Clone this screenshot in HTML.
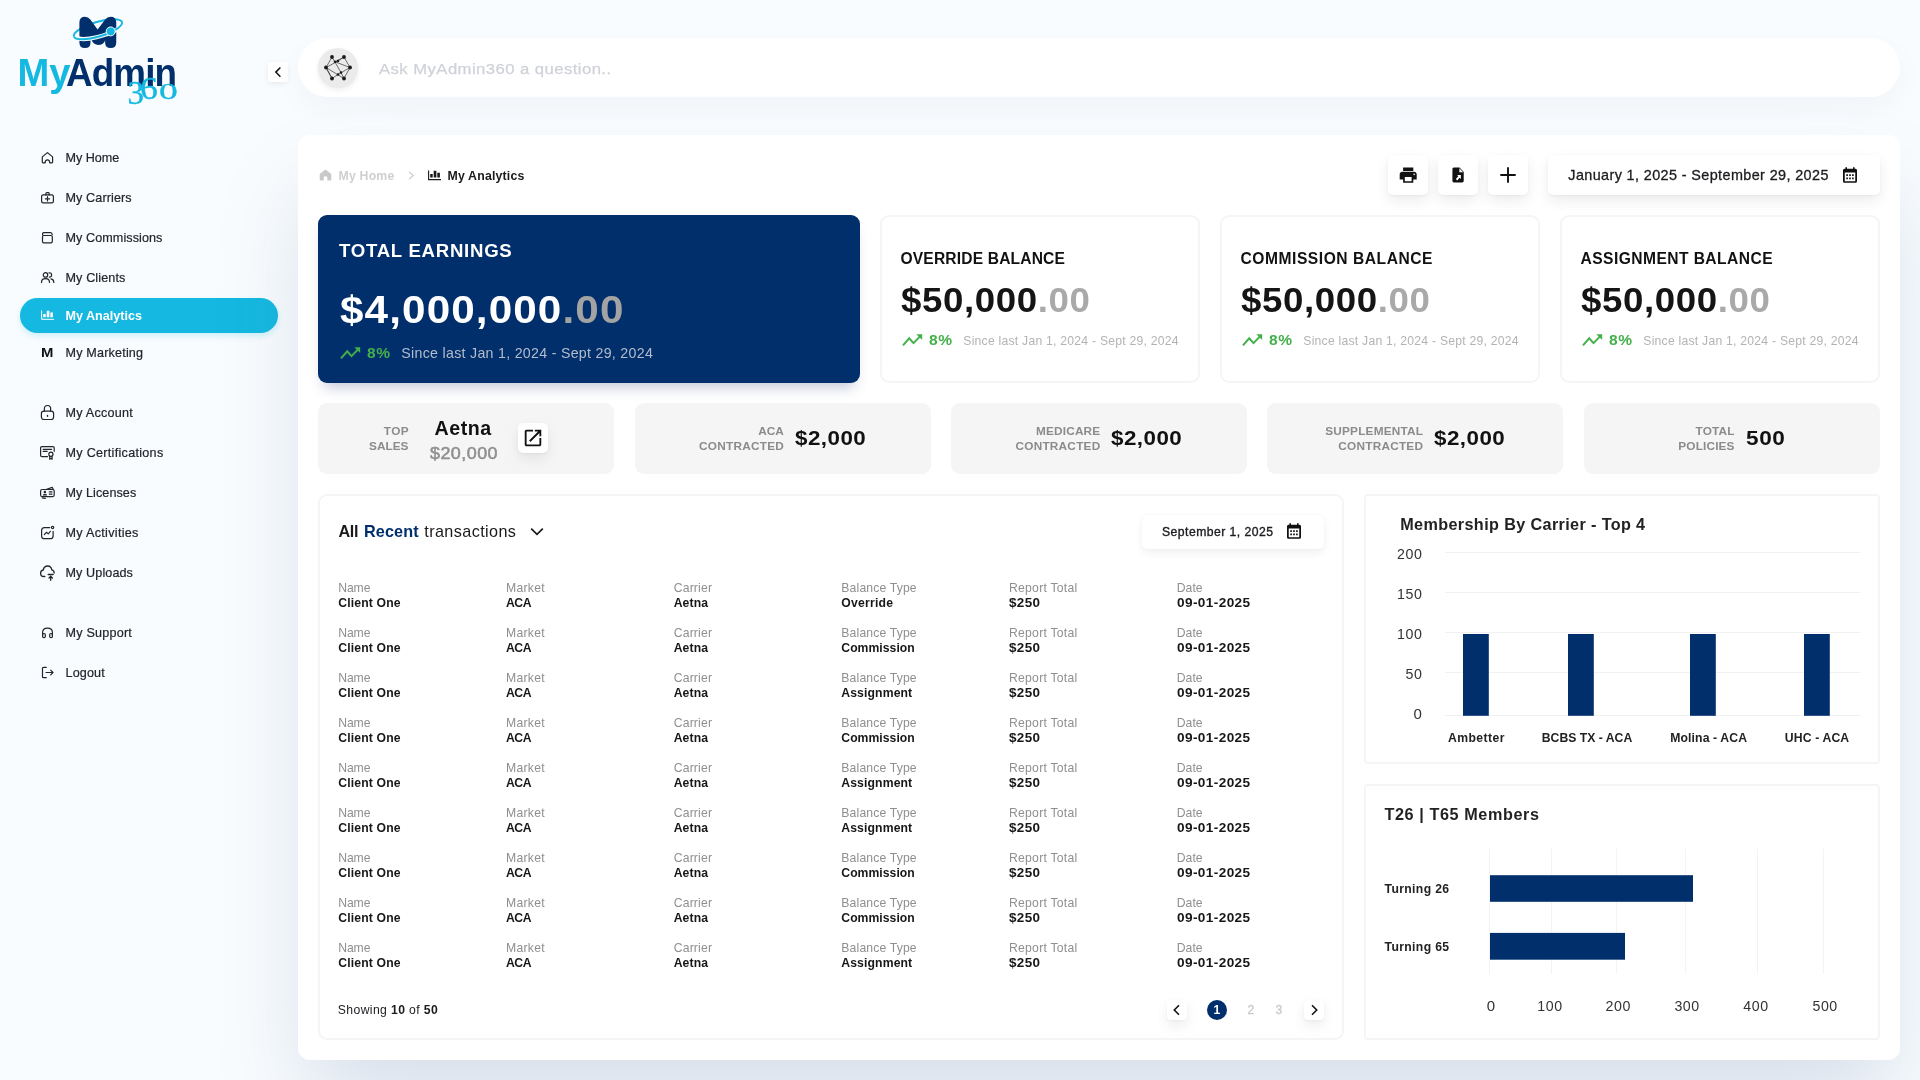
<!DOCTYPE html>
<html lang="en">
<head>
<meta charset="utf-8">
<title>MyAdmin360 - My Analytics</title>
<style>
*{box-sizing:border-box;margin:0;padding:0}
html,body{width:1920px;height:1080px;overflow:hidden}
body{position:relative;font-family:"Liberation Sans",Arial,sans-serif;color:#1b1b1f;background:#f9fcfe}
#root{position:absolute;left:0;top:0;width:1920px;height:1080px;will-change:transform}
.abs{position:absolute}
.t{position:absolute;white-space:nowrap;line-height:1}
.ico{position:absolute;overflow:visible}
.nv{fill:none;stroke:#22252b;stroke-width:1.2;stroke-linecap:round;stroke-linejoin:round}
#pill{position:absolute;left:20px;top:298px;width:258px;height:35px;border-radius:18px;background:#14b8e0;box-shadow:0 3px 6px rgba(20,184,224,.2)}
#search{position:absolute;left:298px;top:38px;width:1602px;height:59px;border-radius:30px;background:#fff;box-shadow:0 12px 26px rgba(92,120,162,.05)}
#main{position:absolute;left:298px;top:135px;width:1602px;height:925px;border-radius:12px;background:#fff;box-shadow:0 50px 90px -10px rgba(92,120,162,.22)}
.btn{position:absolute;background:#fff;border-radius:5px;box-shadow:0 6px 14px rgba(0,0,0,.075),0 1px 3px rgba(0,0,0,.045)}
.card{position:absolute;background:#fff;border:2px solid #f5f5f5;border-radius:9px}
.stat{position:absolute;top:403px;height:70.5px;width:296px;background:#f5f5f5;border-radius:9px}
</style>
</head>
<body>
<div id="root">

<svg class="ico" style="left:60px;top:5px" width="80" height="50" viewBox="0 0 80 50">
 <path d="M13.900 31.500 A25.100 7.300 -16.700 0 1 62 17.100" fill="none" stroke="#14b8e0" stroke-width="2"/>
 <path d="M19.400 37.500 L19.400 17.500 Q19.400 11.800 25 11.800 Q28.300 11.800 30.300 14.500 L37.600 24.600 L45.200 14.500 Q47.200 11.800 50.600 11.800 Q56.250 11.800 56.250 17.500 L56.250 37.500 Q56.250 43.050 50.700 43.050 Q45.100 43.050 45.100 37.500 L45.100 35 C44.500 38.500 41.500 39.900 38.400 39.900 C35 39.900 32.600 38 31.600 35 L30.500 35 L30.500 37.500 Q30.500 43.050 25 43.050 Q19.400 43.050 19.400 37.500 Z" fill="#002f6c"/>
 <path d="M57.500 24 A25.100 7.300 -16.700 0 1 18 33.300" fill="none" stroke="#f9fcfe" stroke-width="4.200"/>
 <path d="M62 17.100 A25.100 7.300 -16.700 0 1 13.900 31.500" fill="none" stroke="#14b8e0" stroke-width="2"/>
 <circle cx="50.700" cy="26.400" r="4.500" fill="#14b8e0" stroke="#f9fcfe" stroke-width="1"/>
</svg>
<span id="t0" class="t" style="left:17.40px;top:54.00px;font-size:38.2px;font-weight:bold;color:#14b8e0;letter-spacing:0.069px">My</span><span id="t1" class="t" style="left:66.30px;transform:scaleX(0.9638);transform-origin:left center;top:54.00px;font-size:38.2px;font-weight:bold;color:#002f6c;letter-spacing:-0.892px">Admin</span>
<span id="t2" class="t" style="left:127.40px;top:77.00px;font-size:33px;color:#14b8e0;-webkit-text-stroke:0.4px;font-family:'Liberation Serif',serif">3</span><span id="t3" class="t" style="left:139.60px;transform:scaleX(1.1300);transform-origin:left center;top:73.00px;font-size:31.5px;color:#14b8e0;-webkit-text-stroke:0.4px;letter-spacing:1.507px;font-family:'Liberation Serif',serif">6</span><span id="t4" class="t" style="left:158.80px;transform:scaleX(1.6000);transform-origin:left center;top:80.00px;font-size:23.5px;color:#14b8e0;-webkit-text-stroke:0.3px;letter-spacing:-0.125px;font-family:'Liberation Serif',serif">0</span>
<div id="pill"></div>
<svg class="ico" style="left:40px;top:150.3px" width="15" height="15" viewBox="0 0 15 15"><path class="nv" d="M2.300 6.900 L7.450 2.600 L12.600 6.900 V12.050 Q12.600 12.850 11.800 12.850 H9.750 Q9.750 9.900 7.450 9.900 Q5.150 9.900 5.150 12.850 H3.100 Q2.300 12.850 2.300 12.050 Z"/></svg>
<span id="t5" class="t" style="left:65.50px;top:152.00px;font-size:12.6px;color:#22252b;-webkit-text-stroke:0.2px;letter-spacing:-0.020px">My Home</span>
<svg class="ico" style="left:40px;top:190.3px" width="15" height="15" viewBox="0 0 15 15"><rect class="nv" x="1.600" y="4.900" width="11.800" height="7.950" rx="1.600"/><path class="nv" d="M5.900 4.900 V3.400 Q5.900 2.600 6.700 2.600 H8.300 Q9.100 2.600 9.100 3.400 V4.900 M7.500 6.700 V11 M5.350 8.850 H9.650"/></svg>
<span id="t6" class="t" style="left:65.50px;top:192.00px;font-size:12.6px;color:#22252b;-webkit-text-stroke:0.2px;letter-spacing:0.107px">My Carriers</span>
<svg class="ico" style="left:40px;top:230.3px" width="15" height="15" viewBox="0 0 15 15"><rect class="nv" x="2.500" y="5.500" width="9.800" height="7.350" rx="1.300"/><path class="nv" d="M2.600 5 V3.900 Q2.600 2.600 3.900 2.600 H10.600 Q12 2.600 12.200 4.600"/></svg>
<span id="t7" class="t" style="left:65.50px;top:232.00px;font-size:12.6px;color:#22252b;-webkit-text-stroke:0.2px;letter-spacing:0.080px">My Commissions</span>
<svg class="ico" style="left:40px;top:270.3px" width="15" height="15" viewBox="0 0 15 15"><circle class="nv" cx="5.500" cy="4.900" r="2.250"/><path class="nv" d="M1.500 12.400 Q1.500 8.700 5.500 8.700 Q9.500 8.700 9.500 12.400 M9 2.800 Q11.600 2.600 11.600 4.900 Q11.600 7 9.400 7.100 M11 8.900 Q13.800 9.400 13.800 12.400"/></svg>
<span id="t8" class="t" style="left:65.50px;top:272.00px;font-size:12.6px;color:#22252b;-webkit-text-stroke:0.2px;letter-spacing:0.122px">My Clients</span>
<svg class="ico" style="left:40px;top:308.3px" width="15" height="15" viewBox="0 0 15 15"><path d="M1.600 2.500 V11.300 H14" fill="none" stroke="#fff" stroke-width="1"/><path d="M3.200 6 h2.500 v3.300 h-2.500z M6.700 2.750 h2.650 v6.550 h-2.650z M10.300 4.600 h2.600 v4.700 h-2.600z" fill="#fff"/></svg>
<span id="t9" class="t" style="left:65.50px;top:310.00px;font-size:12.6px;font-weight:bold;color:#fff">My Analytics</span>
<span id="t10" class="t" style="left:41.00px;transform:scaleX(1.1011);transform-origin:left center;top:346.00px;font-size:13.5px;font-weight:bold;color:#111;letter-spacing:0.556px">M</span>
<span id="t11" class="t" style="left:65.50px;top:347.00px;font-size:12.6px;color:#22252b;-webkit-text-stroke:0.2px;letter-spacing:0.180px">My Marketing</span>
<svg class="ico" style="left:40px;top:405.3px" width="15" height="15" viewBox="0 0 15 15"><rect class="nv" x="1.400" y="6.100" width="12.200" height="8.400" rx="2.500"/><path class="nv" d="M4.350 6.100 V3.800 Q4.350 0.500 7.500 0.500 Q10.650 0.500 10.650 3.800 V6.100"/><rect x="6.800" y="9.700" width="1.400" height="2.300" rx="0.700" fill="#22252b"/></svg>
<span id="t12" class="t" style="left:65.50px;top:407.00px;font-size:12.6px;color:#22252b;-webkit-text-stroke:0.2px;letter-spacing:0.239px">My Account</span>
<svg class="ico" style="left:40px;top:445.3px" width="15" height="15" viewBox="0 0 15 15"><path class="nv" d="M7.600 11.600 H2 Q0.600 11.600 0.600 10.200 V3 Q0.600 1.550 2 1.550 H12.800 Q14.200 1.550 14.200 3 V6.300 M3.200 4.300 H11.600 M3.200 6.400 H7.200"/><circle class="nv" cx="10.900" cy="9.300" r="2.100"/><path class="nv" d="M9.700 11.200 V14.200 L10.900 13.300 L12.100 14.200 V11.200"/></svg>
<span id="t13" class="t" style="left:65.50px;top:447.00px;font-size:12.6px;color:#22252b;-webkit-text-stroke:0.2px;letter-spacing:0.290px">My Certifications</span>
<svg class="ico" style="left:40px;top:485.3px" width="15" height="15" viewBox="0 0 15 15"><rect class="nv" x="0.600" y="4.500" width="13.600" height="7.100" rx="1.500"/><path class="nv" d="M6 4.500 L12.200 2.400 L13.300 4.500 M2.200 12.900 L5.200 13.300 M9.300 6.900 H12 M9.300 9.100 H12"/><circle cx="4.900" cy="7" r="1.250" fill="#22252b"/><path d="M2.700 10.600 Q2.700 8.700 4.900 8.700 Q7.100 8.700 7.100 10.600 Z" fill="#22252b"/></svg>
<span id="t14" class="t" style="left:65.50px;top:487.00px;font-size:12.6px;color:#22252b;-webkit-text-stroke:0.2px;letter-spacing:0.073px">My Licenses</span>
<svg class="ico" style="left:40px;top:525.3px" width="15" height="15" viewBox="0 0 15 15"><path class="nv" d="M9.800 2.600 H4.400 Q1.600 2.600 1.600 5.400 V10.900 Q1.600 13.700 4.400 13.700 H10.300 Q13.100 13.700 13.100 10.900 V6.300"/><circle class="nv" cx="12.600" cy="2.600" r="1.150"/><path class="nv" d="M4.300 9.600 L6.300 7.300 L8.200 8.800 L10.400 6.400"/></svg>
<span id="t15" class="t" style="left:65.50px;top:527.00px;font-size:12.6px;color:#22252b;-webkit-text-stroke:0.2px;letter-spacing:0.301px">My Activities</span>
<svg class="ico" style="left:40px;top:565.3px" width="15" height="15" viewBox="0 0 15 15"><g transform="translate(7.300 8.100) scale(1.100 1.220) translate(-7.500 -8.150)"><path class="nv" d="M5.200 11 H4.300 Q1.400 11 1.400 8.300 Q1.400 5.900 3.800 5.600 Q4.500 2.300 7.800 2.300 Q11 2.300 11.600 5.500 Q13.700 5.900 13.700 8"/><path class="nv" d="M8.300 9.300 H12.800 M10.600 14 V10.800 M9.100 12.200 L10.600 10.700 L12.100 12.200"/></g></svg>
<span id="t16" class="t" style="left:65.50px;top:567.00px;font-size:12.6px;color:#22252b;-webkit-text-stroke:0.2px;letter-spacing:0.100px">My Uploads</span>
<svg class="ico" style="left:40px;top:625.3px" width="15" height="15" viewBox="0 0 15 15"><path class="nv" d="M2.600 10.400 V7.500 Q2.600 3.200 7.500 3.200 Q12.400 3.200 12.400 7.500 V10.400"/><rect class="nv" x="2.600" y="8.500" width="2.700" height="4.200" rx="1.200"/><rect class="nv" x="9.700" y="8.500" width="2.700" height="4.200" rx="1.200"/></svg>
<span id="t17" class="t" style="left:65.50px;top:627.00px;font-size:12.6px;color:#22252b;-webkit-text-stroke:0.2px;letter-spacing:0.219px">My Support</span>
<svg class="ico" style="left:40px;top:665.3px" width="15" height="15" viewBox="0 0 15 15"><path class="nv" d="M6.300 2.300 H3.500 Q2.500 2.300 2.500 3.300 V11.700 Q2.500 12.700 3.500 12.700 H6.300 M6 7.500 H13 M10.700 5.200 L13 7.500 L10.700 9.800"/></svg>
<span id="t18" class="t" style="left:65.50px;top:667.00px;font-size:12.6px;color:#22252b;-webkit-text-stroke:0.2px;letter-spacing:0.145px">Logout</span>
<div class="btn" style="left:268px;top:62px;width:20px;height:20px;border-radius:3px;box-shadow:0 2px 6px rgba(0,0,0,.07)">
<svg width="20" height="20" viewBox="0 0 20 20"><path d="M12.400 5.500 L7.800 10.100 L12.400 14.700" fill="none" stroke="#111" stroke-width="1.500"/></svg></div>
<div id="search"><div class="abs" style="left:20px;top:10px;width:40px;height:40px;border-radius:50%;background:#ebebeb;box-shadow:0 2px 5px rgba(0,0,0,.07)"></div>
<svg class="ico" style="left:20px;top:10px" width="40" height="40" viewBox="0 0 40 40">
<g stroke="#1a1a1a" stroke-width="0.600" fill="none"><path d="M14 9 L8 19.500 L14 30.500 M26 9 L32 19.500 L26 30.500 M14 9 L23 24.500 M26 9 L17 13.800 M8 19.500 L20 13 M32 19.500 L20 26.500 M14 30.500 L8 19.500 M26 30.500 L23 24.500 M8 19.500 L26 30.500 M32 19.500 L17 13.800 M20 13 L26 9 M14 30.500 L20 26.500"/></g>
<g fill="#1a1a1a"><circle cx="14" cy="9" r="1.900"/><circle cx="26" cy="9" r="1.900"/><circle cx="8" cy="19.500" r="1.900"/><circle cx="32" cy="19.500" r="1.900"/><circle cx="14" cy="30.500" r="1.900"/><circle cx="26" cy="30.500" r="1.900"/><circle cx="17" cy="13.800" r="1.300"/><circle cx="20" cy="13" r="1.300"/><circle cx="23" cy="24.500" r="1.300"/><circle cx="20" cy="26.500" r="1.300"/></g>
</svg></div>
<span id="t19" class="t" style="left:378.80px;transform:scaleX(1.1068);transform-origin:left center;top:61.00px;font-size:15.1px;color:#cfd2d8;-webkit-text-stroke:0.25px;letter-spacing:0.384px">Ask MyAdmin360 a question..</span>
<div id="main"></div>
<svg class="ico" style="left:319px;top:169px" width="13" height="12" viewBox="0 0 13 12"><path d="M0.700 5 L6.500 0.500 L12.300 5 V10.500 Q12.300 11.600 11.200 11.600 H8.300 V8.300 Q8.300 7.300 6.500 7.300 Q4.700 7.300 4.700 8.300 V11.600 H1.800 Q0.700 11.600 0.700 10.500 Z" fill="#c9c9c9"/></svg>
<span id="t20" class="t" style="left:338.50px;top:170.00px;font-size:12.3px;font-weight:bold;color:#cfcfcf;letter-spacing:0.190px">My Home</span>
<svg class="ico" style="left:406px;top:170px" width="10" height="11" viewBox="0 0 10 11"><path d="M3 1.700 L7.200 5.500 L3 9.300" fill="none" stroke="#cfcfcf" stroke-width="1.200"/></svg>
<svg class="ico" style="left:426.900px;top:167.600px" width="15" height="15" viewBox="0 0 15 15"><path d="M1.600 2.500 V11.600 H14" fill="none" stroke="#1a1a1a" stroke-width="1.100"/><path d="M3.200 6.100 h2.500 v3.500 h-2.500z M6.700 2.750 h2.650 v6.850 h-2.650z M10.300 4.700 h2.600 v4.900 h-2.600z" fill="#1a1a1a"/></svg>
<span id="t21" class="t" style="left:447.50px;top:170.00px;font-size:12.3px;font-weight:bold;color:#1a1a1a;letter-spacing:0.190px">My Analytics</span>
<div class="btn" style="left:1388px;top:155px;width:40px;height:40px"></div>
<div class="btn" style="left:1438px;top:155px;width:40px;height:40px"></div>
<div class="btn" style="left:1488px;top:155px;width:40px;height:40px"></div>
<div class="btn" style="left:1548px;top:155px;width:332px;height:40px"></div>
<svg class="ico" style="left:1397.800px;top:164.900px" width="20.400" height="20.400" viewBox="0 0 24 24"><path d="M19 8H5c-1.660 0-3 1.340-3 3v6h4v4h12v-4h4v-6c0-1.660-1.340-3-3-3zm-3 11H8v-5h8v5zm3-7c-.55 0-1-.45-1-1s.45-1 1-1 1 .45 1 1-.45 1-1 1zm-1-9H6v4h12V3z" fill="#111"/></svg>
<svg class="ico" style="left:1451.800px;top:167px" width="12.300" height="16" viewBox="0 0 15 18" preserveAspectRatio="none"><path d="M2.200 0.500 H9.200 L14.300 5.600 V15.600 Q14.300 17.400 12.500 17.400 H2.200 Q0.500 17.400 0.500 15.600 V2.300 Q0.500 0.500 2.200 0.500 Z" fill="#111"/><path d="M9 1.300 V5.900 H13.600 Z" fill="#fff"/><path d="M6.200 9 H10.800 V13.600 L9.300 12.100 L6.300 15.100 L4.700 13.500 L7.700 10.500 Z" fill="#fff"/></svg>
<svg class="ico" style="left:1500px;top:167px" width="16" height="16" viewBox="0 0 16 16"><path d="M8 0.300 V15.700 M0.300 8 H15.700" stroke="#111" stroke-width="1.900" fill="none"/></svg>
<span id="t22" class="t" style="left:1568.30px;top:168.00px;font-size:14.4px;color:#1c1c20;-webkit-text-stroke:0.3px;letter-spacing:0.391px">January 1, 2025 - September 29, 2025</span>
<svg class="ico" style="left:1843.3px;top:167.0px" width="14.0" height="16.0" viewBox="0 0 14 16"><path d="M2.400 0.200 h1.600 v1.600 h6 v-1.600 h1.600 v1.600 h0.900 q1.500 0 1.500 1.500 v11 q0 1.500 -1.500 1.500 h-11 q-1.500 0 -1.500 -1.500 v-11 q0 -1.500 1.500 -1.500 h0.900 z M1.750 5.400 v8.400 q0 0.500 0.500 0.500 h9.500 q0.500 0 0.500 -0.500 v-8.400 z" fill="#111" fill-rule="evenodd"/><path d="M3.200 7.200 h1.800 v1.800 h-1.800z M6.100 7.200 h1.800 v1.800 h-1.800z M9 7.200 h1.800 v1.800 h-1.800z M3.200 10.400 h1.800 v1.800 h-1.800z M6.100 10.400 h1.800 v1.800 h-1.800z M9 10.400 h1.800 v1.800 h-1.800z" fill="#222"/></svg>
<div class="abs" style="left:318px;top:215px;width:542px;height:168px;border-radius:9px;background:#002f6c;box-shadow:0 10px 14px -6px rgba(50,65,130,.30)"></div>
<span id="t23" class="t" style="left:339.00px;top:242.00px;font-size:18.6px;font-weight:bold;color:#fff;letter-spacing:0.733px">TOTAL EARNINGS</span>
<span id="t24" class="t" style="left:339.50px;transform:scaleX(1.1110);transform-origin:left center;top:291.00px;font-size:38px;font-weight:bold;color:#fff;letter-spacing:1.005px">$4,000,000<span style="color:#a3a3a3">.00</span></span>
<svg class="ico" style="left:340.0px;top:346.7px" width="21" height="13" viewBox="0 0 21 13"><path d="M1 11.300 L7.200 4.300 L11.500 9.100 L18 2.400" fill="none" stroke="#43b04a" stroke-width="2" stroke-linejoin="miter"/><path d="M14.300 0.200 H20.200 V6.100 Z" fill="#43b04a"/></svg>
<span id="t25" class="t" style="left:366.50px;transform:scaleX(1.0946);transform-origin:left center;top:346.00px;font-size:14.2px;font-weight:bold;color:#43b04a;letter-spacing:0.477px">8%</span>
<span id="t26" class="t" style="left:401.30px;top:346.00px;font-size:14.2px;color:#b4bccb;letter-spacing:0.295px">Since last Jan 1, 2024 - Sept 29, 2024</span>
<div class="card" style="left:880px;top:215px;width:320px;height:168px"></div>
<span id="t27" class="t" style="left:900.50px;top:251.00px;font-size:15.6px;font-weight:bold;color:#111;letter-spacing:0.162px">OVERRIDE BALANCE</span>
<span id="t28" class="t" style="left:901.00px;transform:scaleX(1.0655);transform-origin:left center;top:283.00px;font-size:34.4px;font-weight:bold;color:#151515;letter-spacing:0.570px">$50,000<span style="color:#a9a9a9">.00</span></span>
<svg class="ico" style="left:901.5px;top:333.7px" width="21" height="13" viewBox="0 0 21 13"><path d="M1 11.300 L7.200 4.300 L11.500 9.100 L18 2.400" fill="none" stroke="#43b04a" stroke-width="2" stroke-linejoin="miter"/><path d="M14.300 0.200 H20.200 V6.100 Z" fill="#43b04a"/></svg>
<span id="t29" class="t" style="left:928.60px;transform:scaleX(1.0946);transform-origin:left center;top:333.00px;font-size:14.2px;font-weight:bold;color:#43b04a;letter-spacing:0.477px">8%</span>
<span id="t30" class="t" style="left:963.30px;top:335.00px;font-size:12.2px;color:#b3b3b3;letter-spacing:0.233px">Since last Jan 1, 2024 - Sept 29, 2024</span>
<div class="card" style="left:1220px;top:215px;width:320px;height:168px"></div>
<span id="t31" class="t" style="left:1240.50px;top:251.00px;font-size:15.6px;font-weight:bold;color:#111;letter-spacing:0.539px">COMMISSION BALANCE</span>
<span id="t32" class="t" style="left:1241.00px;transform:scaleX(1.0655);transform-origin:left center;top:283.00px;font-size:34.4px;font-weight:bold;color:#151515;letter-spacing:0.570px">$50,000<span style="color:#a9a9a9">.00</span></span>
<svg class="ico" style="left:1241.5px;top:333.7px" width="21" height="13" viewBox="0 0 21 13"><path d="M1 11.300 L7.200 4.300 L11.500 9.100 L18 2.400" fill="none" stroke="#43b04a" stroke-width="2" stroke-linejoin="miter"/><path d="M14.300 0.200 H20.200 V6.100 Z" fill="#43b04a"/></svg>
<span id="t33" class="t" style="left:1268.60px;transform:scaleX(1.0946);transform-origin:left center;top:333.00px;font-size:14.2px;font-weight:bold;color:#43b04a;letter-spacing:0.477px">8%</span>
<span id="t34" class="t" style="left:1303.30px;top:335.00px;font-size:12.2px;color:#b3b3b3;letter-spacing:0.233px">Since last Jan 1, 2024 - Sept 29, 2024</span>
<div class="card" style="left:1560px;top:215px;width:320px;height:168px"></div>
<span id="t35" class="t" style="left:1580.50px;top:251.00px;font-size:15.6px;font-weight:bold;color:#111;letter-spacing:0.443px">ASSIGNMENT BALANCE</span>
<span id="t36" class="t" style="left:1581.00px;transform:scaleX(1.0655);transform-origin:left center;top:283.00px;font-size:34.4px;font-weight:bold;color:#151515;letter-spacing:0.570px">$50,000<span style="color:#a9a9a9">.00</span></span>
<svg class="ico" style="left:1581.5px;top:333.7px" width="21" height="13" viewBox="0 0 21 13"><path d="M1 11.300 L7.200 4.300 L11.500 9.100 L18 2.400" fill="none" stroke="#43b04a" stroke-width="2" stroke-linejoin="miter"/><path d="M14.300 0.200 H20.200 V6.100 Z" fill="#43b04a"/></svg>
<span id="t37" class="t" style="left:1608.60px;transform:scaleX(1.0946);transform-origin:left center;top:333.00px;font-size:14.2px;font-weight:bold;color:#43b04a;letter-spacing:0.477px">8%</span>
<span id="t38" class="t" style="left:1643.30px;top:335.00px;font-size:12.2px;color:#b3b3b3;letter-spacing:0.233px">Since last Jan 1, 2024 - Sept 29, 2024</span>
<div class="stat" style="left:318.0px"></div>
<div class="stat" style="left:634.5px"></div>
<div class="stat" style="left:951.0px"></div>
<div class="stat" style="left:1267.3px"></div>
<div class="stat" style="left:1584.0px"></div>
<span id="t39" class="t" style="right:1511.18px;top:426.00px;font-size:11.8px;font-weight:bold;color:#8b8b8b;letter-spacing:0.318px">TOP</span>
<span id="t40" class="t" style="right:1511.47px;top:441.00px;font-size:11.8px;font-weight:bold;color:#8b8b8b;letter-spacing:0.031px">SALES</span>
<span id="t41" class="t" style="left:434.50px;top:419.00px;font-size:19.6px;font-weight:bold;color:#111;letter-spacing:0.569px">Aetna</span>
<span id="t42" class="t" style="left:429.50px;transform:scaleX(1.0960);transform-origin:left center;top:445.00px;font-size:16.4px;color:#8f8f8f;-webkit-text-stroke:0.5px;letter-spacing:0.399px">$20,000</span>
<div class="btn" style="left:518px;top:423px;width:30px;height:30px;border-radius:5px"></div>
<svg class="ico" style="left:522px;top:427px" width="22" height="22" viewBox="0 0 24 24"><path d="M19 19H5V5h7V3H5c-1.110 0-2 .9-2 2v14c0 1.100.89 2 2 2h14c1.100 0 2-.9 2-2v-7h-2v7zM14 3v2h3.590l-9.830 9.830 1.410 1.410L19 6.410V10h2V3h-7z" fill="#111"/></svg>
<span id="t43" class="t" style="right:1136.19px;top:426.00px;font-size:11.8px;font-weight:bold;color:#8b8b8b;letter-spacing:0.013px">ACA</span>
<span id="t44" class="t" style="right:1135.96px;top:441.00px;font-size:11.8px;font-weight:bold;color:#8b8b8b;letter-spacing:0.242px">CONTRACTED</span>
<span id="t45" class="t" style="left:795.00px;transform:scaleX(1.0856);transform-origin:left center;top:428.00px;font-size:20.6px;font-weight:bold;color:#111;letter-spacing:0.446px">$2,000</span>
<span id="t46" class="t" style="right:819.60px;top:426.00px;font-size:11.8px;font-weight:bold;color:#8b8b8b;letter-spacing:0.197px">MEDICARE</span>
<span id="t47" class="t" style="right:819.56px;top:441.00px;font-size:11.8px;font-weight:bold;color:#8b8b8b;letter-spacing:0.242px">CONTRACTED</span>
<span id="t48" class="t" style="left:1111.40px;transform:scaleX(1.0856);transform-origin:left center;top:428.00px;font-size:20.6px;font-weight:bold;color:#111;letter-spacing:0.446px">$2,000</span>
<span id="t49" class="t" style="right:496.79px;top:426.00px;font-size:11.8px;font-weight:bold;color:#8b8b8b;letter-spacing:0.210px">SUPPLEMENTAL</span>
<span id="t50" class="t" style="right:496.76px;top:441.00px;font-size:11.8px;font-weight:bold;color:#8b8b8b;letter-spacing:0.242px">CONTRACTED</span>
<span id="t51" class="t" style="left:1434.30px;transform:scaleX(1.0856);transform-origin:left center;top:428.00px;font-size:20.6px;font-weight:bold;color:#111;letter-spacing:0.446px">$2,000</span>
<span id="t52" class="t" style="right:185.31px;top:426.00px;font-size:11.8px;font-weight:bold;color:#8b8b8b;letter-spacing:0.193px">TOTAL</span>
<span id="t53" class="t" style="right:185.35px;top:441.00px;font-size:11.8px;font-weight:bold;color:#8b8b8b;letter-spacing:0.155px">POLICIES</span>
<span id="t54" class="t" style="left:1745.50px;transform:scaleX(1.0969);transform-origin:left center;top:428.00px;font-size:20.6px;font-weight:bold;color:#111;letter-spacing:0.545px">500</span>
<div class="card" style="left:318px;top:494px;width:1026px;height:546px"></div>
<span id="t55" class="t" style="left:338.40px;top:523.00px;font-size:16.2px;font-weight:bold;color:#1a1a1a;letter-spacing:-0.329px">All</span>
<span id="t56" class="t" style="left:364.00px;top:523.00px;font-size:16.2px;font-weight:bold;color:#002f6c;letter-spacing:0.119px">Recent</span>
<span id="t57" class="t" style="left:424.30px;top:523.00px;font-size:16.2px;color:#1a1a1a;letter-spacing:0.393px">transactions</span>
<svg class="ico" style="left:529px;top:525px" width="16" height="14" viewBox="0 0 16 14"><path d="M2.200 3.600 L8 9.400 L13.800 3.600" fill="none" stroke="#1a1a1a" stroke-width="1.700"/></svg>
<div class="btn" style="left:1142px;top:514.500px;width:182px;height:34.500px;box-shadow:0 4px 8px rgba(0,0,0,.06),0 0 2px rgba(0,0,0,.05)"></div>
<span id="t58" class="t" style="left:1162.00px;top:526.00px;font-size:12.2px;color:#1c1c20;-webkit-text-stroke:0.35px;letter-spacing:0.460px">September 1, 2025</span>
<svg class="ico" style="left:1287.0px;top:523.3px" width="14.0" height="16.0" viewBox="0 0 14 16"><path d="M2.400 0.200 h1.600 v1.600 h6 v-1.600 h1.600 v1.600 h0.900 q1.500 0 1.500 1.500 v11 q0 1.500 -1.500 1.500 h-11 q-1.500 0 -1.500 -1.500 v-11 q0 -1.500 1.500 -1.500 h0.900 z M1.750 5.400 v8.400 q0 0.500 0.500 0.500 h9.500 q0.500 0 0.500 -0.500 v-8.400 z" fill="#111" fill-rule="evenodd"/><path d="M3.200 7.200 h1.800 v1.800 h-1.800z M6.100 7.200 h1.800 v1.800 h-1.800z M9 7.200 h1.800 v1.800 h-1.800z M3.200 10.400 h1.800 v1.800 h-1.800z M6.100 10.400 h1.800 v1.800 h-1.800z M9 10.400 h1.800 v1.800 h-1.800z" fill="#222"/></svg>
<span id="t59" class="t" style="left:338.30px;top:582.00px;font-size:12.2px;color:#8f8f8f;letter-spacing:-0.129px">Name</span>
<span id="t60" class="t" style="left:338.30px;top:597.00px;font-size:12.2px;font-weight:bold;color:#171717;letter-spacing:0.155px">Client One</span>
<span id="t61" class="t" style="left:506.00px;top:582.00px;font-size:12.2px;color:#8f8f8f;letter-spacing:0.292px">Market</span>
<span id="t62" class="t" style="left:506.00px;top:597.00px;font-size:12.2px;font-weight:bold;color:#171717;letter-spacing:-0.469px">ACA</span>
<span id="t63" class="t" style="left:673.70px;top:582.00px;font-size:12.2px;color:#8f8f8f;letter-spacing:0.179px">Carrier</span>
<span id="t64" class="t" style="left:673.70px;top:597.00px;font-size:12.2px;font-weight:bold;color:#171717;letter-spacing:0.125px">Aetna</span>
<span id="t65" class="t" style="left:841.30px;top:582.00px;font-size:12.2px;color:#8f8f8f;letter-spacing:0.155px">Balance Type</span>
<span id="t66" class="t" style="left:841.30px;top:597.00px;font-size:12.2px;font-weight:bold;color:#171717;letter-spacing:0.232px">Override</span>
<span id="t67" class="t" style="left:1009.00px;top:582.00px;font-size:12.2px;color:#8f8f8f;letter-spacing:0.250px">Report Total</span>
<span id="t68" class="t" style="left:1009.00px;transform:scaleX(1.1048);transform-origin:left center;top:597.00px;font-size:12.2px;font-weight:bold;color:#171717;letter-spacing:0.346px">$250</span>
<span id="t69" class="t" style="left:1176.70px;top:582.00px;font-size:12.2px;color:#8f8f8f;letter-spacing:0.062px">Date</span>
<span id="t70" class="t" style="left:1176.70px;transform:scaleX(1.1163);transform-origin:left center;top:597.00px;font-size:12.2px;font-weight:bold;color:#171717;letter-spacing:0.350px">09-01-2025</span>
<span id="t71" class="t" style="left:338.30px;top:627.00px;font-size:12.2px;color:#8f8f8f;letter-spacing:-0.129px">Name</span>
<span id="t72" class="t" style="left:338.30px;top:642.00px;font-size:12.2px;font-weight:bold;color:#171717;letter-spacing:0.155px">Client One</span>
<span id="t73" class="t" style="left:506.00px;top:627.00px;font-size:12.2px;color:#8f8f8f;letter-spacing:0.292px">Market</span>
<span id="t74" class="t" style="left:506.00px;top:642.00px;font-size:12.2px;font-weight:bold;color:#171717;letter-spacing:-0.469px">ACA</span>
<span id="t75" class="t" style="left:673.70px;top:627.00px;font-size:12.2px;color:#8f8f8f;letter-spacing:0.179px">Carrier</span>
<span id="t76" class="t" style="left:673.70px;top:642.00px;font-size:12.2px;font-weight:bold;color:#171717;letter-spacing:0.125px">Aetna</span>
<span id="t77" class="t" style="left:841.30px;top:627.00px;font-size:12.2px;color:#8f8f8f;letter-spacing:0.155px">Balance Type</span>
<span id="t78" class="t" style="left:841.30px;top:642.00px;font-size:12.2px;font-weight:bold;color:#171717;letter-spacing:0.036px">Commission</span>
<span id="t79" class="t" style="left:1009.00px;top:627.00px;font-size:12.2px;color:#8f8f8f;letter-spacing:0.250px">Report Total</span>
<span id="t80" class="t" style="left:1009.00px;transform:scaleX(1.1048);transform-origin:left center;top:642.00px;font-size:12.2px;font-weight:bold;color:#171717;letter-spacing:0.346px">$250</span>
<span id="t81" class="t" style="left:1176.70px;top:627.00px;font-size:12.2px;color:#8f8f8f;letter-spacing:0.062px">Date</span>
<span id="t82" class="t" style="left:1176.70px;transform:scaleX(1.1163);transform-origin:left center;top:642.00px;font-size:12.2px;font-weight:bold;color:#171717;letter-spacing:0.350px">09-01-2025</span>
<span id="t83" class="t" style="left:338.30px;top:672.00px;font-size:12.2px;color:#8f8f8f;letter-spacing:-0.129px">Name</span>
<span id="t84" class="t" style="left:338.30px;top:687.00px;font-size:12.2px;font-weight:bold;color:#171717;letter-spacing:0.155px">Client One</span>
<span id="t85" class="t" style="left:506.00px;top:672.00px;font-size:12.2px;color:#8f8f8f;letter-spacing:0.292px">Market</span>
<span id="t86" class="t" style="left:506.00px;top:687.00px;font-size:12.2px;font-weight:bold;color:#171717;letter-spacing:-0.469px">ACA</span>
<span id="t87" class="t" style="left:673.70px;top:672.00px;font-size:12.2px;color:#8f8f8f;letter-spacing:0.179px">Carrier</span>
<span id="t88" class="t" style="left:673.70px;top:687.00px;font-size:12.2px;font-weight:bold;color:#171717;letter-spacing:0.125px">Aetna</span>
<span id="t89" class="t" style="left:841.30px;top:672.00px;font-size:12.2px;color:#8f8f8f;letter-spacing:0.155px">Balance Type</span>
<span id="t90" class="t" style="left:841.30px;top:687.00px;font-size:12.2px;font-weight:bold;color:#171717;letter-spacing:0.123px">Assignment</span>
<span id="t91" class="t" style="left:1009.00px;top:672.00px;font-size:12.2px;color:#8f8f8f;letter-spacing:0.250px">Report Total</span>
<span id="t92" class="t" style="left:1009.00px;transform:scaleX(1.1048);transform-origin:left center;top:687.00px;font-size:12.2px;font-weight:bold;color:#171717;letter-spacing:0.346px">$250</span>
<span id="t93" class="t" style="left:1176.70px;top:672.00px;font-size:12.2px;color:#8f8f8f;letter-spacing:0.062px">Date</span>
<span id="t94" class="t" style="left:1176.70px;transform:scaleX(1.1163);transform-origin:left center;top:687.00px;font-size:12.2px;font-weight:bold;color:#171717;letter-spacing:0.350px">09-01-2025</span>
<span id="t95" class="t" style="left:338.30px;top:717.00px;font-size:12.2px;color:#8f8f8f;letter-spacing:-0.129px">Name</span>
<span id="t96" class="t" style="left:338.30px;top:732.00px;font-size:12.2px;font-weight:bold;color:#171717;letter-spacing:0.155px">Client One</span>
<span id="t97" class="t" style="left:506.00px;top:717.00px;font-size:12.2px;color:#8f8f8f;letter-spacing:0.292px">Market</span>
<span id="t98" class="t" style="left:506.00px;top:732.00px;font-size:12.2px;font-weight:bold;color:#171717;letter-spacing:-0.469px">ACA</span>
<span id="t99" class="t" style="left:673.70px;top:717.00px;font-size:12.2px;color:#8f8f8f;letter-spacing:0.179px">Carrier</span>
<span id="t100" class="t" style="left:673.70px;top:732.00px;font-size:12.2px;font-weight:bold;color:#171717;letter-spacing:0.125px">Aetna</span>
<span id="t101" class="t" style="left:841.30px;top:717.00px;font-size:12.2px;color:#8f8f8f;letter-spacing:0.155px">Balance Type</span>
<span id="t102" class="t" style="left:841.30px;top:732.00px;font-size:12.2px;font-weight:bold;color:#171717;letter-spacing:0.036px">Commission</span>
<span id="t103" class="t" style="left:1009.00px;top:717.00px;font-size:12.2px;color:#8f8f8f;letter-spacing:0.250px">Report Total</span>
<span id="t104" class="t" style="left:1009.00px;transform:scaleX(1.1048);transform-origin:left center;top:732.00px;font-size:12.2px;font-weight:bold;color:#171717;letter-spacing:0.346px">$250</span>
<span id="t105" class="t" style="left:1176.70px;top:717.00px;font-size:12.2px;color:#8f8f8f;letter-spacing:0.062px">Date</span>
<span id="t106" class="t" style="left:1176.70px;transform:scaleX(1.1163);transform-origin:left center;top:732.00px;font-size:12.2px;font-weight:bold;color:#171717;letter-spacing:0.350px">09-01-2025</span>
<span id="t107" class="t" style="left:338.30px;top:762.00px;font-size:12.2px;color:#8f8f8f;letter-spacing:-0.129px">Name</span>
<span id="t108" class="t" style="left:338.30px;top:777.00px;font-size:12.2px;font-weight:bold;color:#171717;letter-spacing:0.155px">Client One</span>
<span id="t109" class="t" style="left:506.00px;top:762.00px;font-size:12.2px;color:#8f8f8f;letter-spacing:0.292px">Market</span>
<span id="t110" class="t" style="left:506.00px;top:777.00px;font-size:12.2px;font-weight:bold;color:#171717;letter-spacing:-0.469px">ACA</span>
<span id="t111" class="t" style="left:673.70px;top:762.00px;font-size:12.2px;color:#8f8f8f;letter-spacing:0.179px">Carrier</span>
<span id="t112" class="t" style="left:673.70px;top:777.00px;font-size:12.2px;font-weight:bold;color:#171717;letter-spacing:0.125px">Aetna</span>
<span id="t113" class="t" style="left:841.30px;top:762.00px;font-size:12.2px;color:#8f8f8f;letter-spacing:0.155px">Balance Type</span>
<span id="t114" class="t" style="left:841.30px;top:777.00px;font-size:12.2px;font-weight:bold;color:#171717;letter-spacing:0.123px">Assignment</span>
<span id="t115" class="t" style="left:1009.00px;top:762.00px;font-size:12.2px;color:#8f8f8f;letter-spacing:0.250px">Report Total</span>
<span id="t116" class="t" style="left:1009.00px;transform:scaleX(1.1048);transform-origin:left center;top:777.00px;font-size:12.2px;font-weight:bold;color:#171717;letter-spacing:0.346px">$250</span>
<span id="t117" class="t" style="left:1176.70px;top:762.00px;font-size:12.2px;color:#8f8f8f;letter-spacing:0.062px">Date</span>
<span id="t118" class="t" style="left:1176.70px;transform:scaleX(1.1163);transform-origin:left center;top:777.00px;font-size:12.2px;font-weight:bold;color:#171717;letter-spacing:0.350px">09-01-2025</span>
<span id="t119" class="t" style="left:338.30px;top:807.00px;font-size:12.2px;color:#8f8f8f;letter-spacing:-0.129px">Name</span>
<span id="t120" class="t" style="left:338.30px;top:822.00px;font-size:12.2px;font-weight:bold;color:#171717;letter-spacing:0.155px">Client One</span>
<span id="t121" class="t" style="left:506.00px;top:807.00px;font-size:12.2px;color:#8f8f8f;letter-spacing:0.292px">Market</span>
<span id="t122" class="t" style="left:506.00px;top:822.00px;font-size:12.2px;font-weight:bold;color:#171717;letter-spacing:-0.469px">ACA</span>
<span id="t123" class="t" style="left:673.70px;top:807.00px;font-size:12.2px;color:#8f8f8f;letter-spacing:0.179px">Carrier</span>
<span id="t124" class="t" style="left:673.70px;top:822.00px;font-size:12.2px;font-weight:bold;color:#171717;letter-spacing:0.125px">Aetna</span>
<span id="t125" class="t" style="left:841.30px;top:807.00px;font-size:12.2px;color:#8f8f8f;letter-spacing:0.155px">Balance Type</span>
<span id="t126" class="t" style="left:841.30px;top:822.00px;font-size:12.2px;font-weight:bold;color:#171717;letter-spacing:0.123px">Assignment</span>
<span id="t127" class="t" style="left:1009.00px;top:807.00px;font-size:12.2px;color:#8f8f8f;letter-spacing:0.250px">Report Total</span>
<span id="t128" class="t" style="left:1009.00px;transform:scaleX(1.1048);transform-origin:left center;top:822.00px;font-size:12.2px;font-weight:bold;color:#171717;letter-spacing:0.346px">$250</span>
<span id="t129" class="t" style="left:1176.70px;top:807.00px;font-size:12.2px;color:#8f8f8f;letter-spacing:0.062px">Date</span>
<span id="t130" class="t" style="left:1176.70px;transform:scaleX(1.1163);transform-origin:left center;top:822.00px;font-size:12.2px;font-weight:bold;color:#171717;letter-spacing:0.350px">09-01-2025</span>
<span id="t131" class="t" style="left:338.30px;top:852.00px;font-size:12.2px;color:#8f8f8f;letter-spacing:-0.129px">Name</span>
<span id="t132" class="t" style="left:338.30px;top:867.00px;font-size:12.2px;font-weight:bold;color:#171717;letter-spacing:0.155px">Client One</span>
<span id="t133" class="t" style="left:506.00px;top:852.00px;font-size:12.2px;color:#8f8f8f;letter-spacing:0.292px">Market</span>
<span id="t134" class="t" style="left:506.00px;top:867.00px;font-size:12.2px;font-weight:bold;color:#171717;letter-spacing:-0.469px">ACA</span>
<span id="t135" class="t" style="left:673.70px;top:852.00px;font-size:12.2px;color:#8f8f8f;letter-spacing:0.179px">Carrier</span>
<span id="t136" class="t" style="left:673.70px;top:867.00px;font-size:12.2px;font-weight:bold;color:#171717;letter-spacing:0.125px">Aetna</span>
<span id="t137" class="t" style="left:841.30px;top:852.00px;font-size:12.2px;color:#8f8f8f;letter-spacing:0.155px">Balance Type</span>
<span id="t138" class="t" style="left:841.30px;top:867.00px;font-size:12.2px;font-weight:bold;color:#171717;letter-spacing:0.036px">Commission</span>
<span id="t139" class="t" style="left:1009.00px;top:852.00px;font-size:12.2px;color:#8f8f8f;letter-spacing:0.250px">Report Total</span>
<span id="t140" class="t" style="left:1009.00px;transform:scaleX(1.1048);transform-origin:left center;top:867.00px;font-size:12.2px;font-weight:bold;color:#171717;letter-spacing:0.346px">$250</span>
<span id="t141" class="t" style="left:1176.70px;top:852.00px;font-size:12.2px;color:#8f8f8f;letter-spacing:0.062px">Date</span>
<span id="t142" class="t" style="left:1176.70px;transform:scaleX(1.1163);transform-origin:left center;top:867.00px;font-size:12.2px;font-weight:bold;color:#171717;letter-spacing:0.350px">09-01-2025</span>
<span id="t143" class="t" style="left:338.30px;top:897.00px;font-size:12.2px;color:#8f8f8f;letter-spacing:-0.129px">Name</span>
<span id="t144" class="t" style="left:338.30px;top:912.00px;font-size:12.2px;font-weight:bold;color:#171717;letter-spacing:0.155px">Client One</span>
<span id="t145" class="t" style="left:506.00px;top:897.00px;font-size:12.2px;color:#8f8f8f;letter-spacing:0.292px">Market</span>
<span id="t146" class="t" style="left:506.00px;top:912.00px;font-size:12.2px;font-weight:bold;color:#171717;letter-spacing:-0.469px">ACA</span>
<span id="t147" class="t" style="left:673.70px;top:897.00px;font-size:12.2px;color:#8f8f8f;letter-spacing:0.179px">Carrier</span>
<span id="t148" class="t" style="left:673.70px;top:912.00px;font-size:12.2px;font-weight:bold;color:#171717;letter-spacing:0.125px">Aetna</span>
<span id="t149" class="t" style="left:841.30px;top:897.00px;font-size:12.2px;color:#8f8f8f;letter-spacing:0.155px">Balance Type</span>
<span id="t150" class="t" style="left:841.30px;top:912.00px;font-size:12.2px;font-weight:bold;color:#171717;letter-spacing:0.036px">Commission</span>
<span id="t151" class="t" style="left:1009.00px;top:897.00px;font-size:12.2px;color:#8f8f8f;letter-spacing:0.250px">Report Total</span>
<span id="t152" class="t" style="left:1009.00px;transform:scaleX(1.1048);transform-origin:left center;top:912.00px;font-size:12.2px;font-weight:bold;color:#171717;letter-spacing:0.346px">$250</span>
<span id="t153" class="t" style="left:1176.70px;top:897.00px;font-size:12.2px;color:#8f8f8f;letter-spacing:0.062px">Date</span>
<span id="t154" class="t" style="left:1176.70px;transform:scaleX(1.1163);transform-origin:left center;top:912.00px;font-size:12.2px;font-weight:bold;color:#171717;letter-spacing:0.350px">09-01-2025</span>
<span id="t155" class="t" style="left:338.30px;top:942.00px;font-size:12.2px;color:#8f8f8f;letter-spacing:-0.129px">Name</span>
<span id="t156" class="t" style="left:338.30px;top:957.00px;font-size:12.2px;font-weight:bold;color:#171717;letter-spacing:0.155px">Client One</span>
<span id="t157" class="t" style="left:506.00px;top:942.00px;font-size:12.2px;color:#8f8f8f;letter-spacing:0.292px">Market</span>
<span id="t158" class="t" style="left:506.00px;top:957.00px;font-size:12.2px;font-weight:bold;color:#171717;letter-spacing:-0.469px">ACA</span>
<span id="t159" class="t" style="left:673.70px;top:942.00px;font-size:12.2px;color:#8f8f8f;letter-spacing:0.179px">Carrier</span>
<span id="t160" class="t" style="left:673.70px;top:957.00px;font-size:12.2px;font-weight:bold;color:#171717;letter-spacing:0.125px">Aetna</span>
<span id="t161" class="t" style="left:841.30px;top:942.00px;font-size:12.2px;color:#8f8f8f;letter-spacing:0.155px">Balance Type</span>
<span id="t162" class="t" style="left:841.30px;top:957.00px;font-size:12.2px;font-weight:bold;color:#171717;letter-spacing:0.123px">Assignment</span>
<span id="t163" class="t" style="left:1009.00px;top:942.00px;font-size:12.2px;color:#8f8f8f;letter-spacing:0.250px">Report Total</span>
<span id="t164" class="t" style="left:1009.00px;transform:scaleX(1.1048);transform-origin:left center;top:957.00px;font-size:12.2px;font-weight:bold;color:#171717;letter-spacing:0.346px">$250</span>
<span id="t165" class="t" style="left:1176.70px;top:942.00px;font-size:12.2px;color:#8f8f8f;letter-spacing:0.062px">Date</span>
<span id="t166" class="t" style="left:1176.70px;transform:scaleX(1.1163);transform-origin:left center;top:957.00px;font-size:12.2px;font-weight:bold;color:#171717;letter-spacing:0.350px">09-01-2025</span>
<span id="t167" class="t" style="left:337.80px;top:1004.00px;font-size:12.2px;color:#1c1c20;letter-spacing:0.381px">Showing <b>10</b> of <b>50</b></span>
<div class="btn" style="left:1167px;top:1000px;width:20px;height:20px;border-radius:4px"><svg width="20" height="20" viewBox="0 0 20 20"><path d="M12 5.300 L7.300 10 L12 14.700" fill="none" stroke="#111" stroke-width="1.600"/></svg></div>
<div class="btn" style="left:1304px;top:1000px;width:20px;height:20px;border-radius:4px"><svg width="20" height="20" viewBox="0 0 20 20"><path d="M8 5.300 L12.700 10 L8 14.700" fill="none" stroke="#111" stroke-width="1.600"/></svg></div>
<div class="abs" style="left:1207px;top:1000px;width:20px;height:20px;border-radius:50%;background:#002f6c"></div>
<span id="t168" class="t" style="left:1217.00px;transform:translateX(-50%);transform-origin:center center;top:1004.00px;font-size:12.2px;font-weight:bold;color:#fff">1</span>
<span id="t169" class="t" style="left:1250.80px;transform:translateX(-50%);transform-origin:center center;top:1004.00px;font-size:12.2px;color:#c9c9c9;-webkit-text-stroke:0.3px">2</span>
<span id="t170" class="t" style="left:1279.00px;transform:translateX(-50%);transform-origin:center center;top:1004.00px;font-size:12.2px;color:#c9c9c9;-webkit-text-stroke:0.3px">3</span>
<div class="card" style="left:1364px;top:494px;width:516px;height:270px;border-radius:4px"></div>
<span id="t171" class="t" style="left:1400.20px;top:516.00px;font-size:16.2px;font-weight:bold;color:#222;letter-spacing:0.373px">Membership By Carrier - Top 4</span>
<svg class="ico" style="left:1364px;top:494px" width="516" height="270" viewBox="1364 494 516 270"><path d="M1445 552.5 H1860" stroke="#f1f1f1" stroke-width="1.200"/><path d="M1445 592.5 H1860" stroke="#f1f1f1" stroke-width="1.200"/><path d="M1445 632.5 H1860" stroke="#f1f1f1" stroke-width="1.200"/><path d="M1445 672.5 H1860" stroke="#f1f1f1" stroke-width="1.200"/><path d="M1445 715.5 H1860" stroke="#f1f1f1" stroke-width="1.200"/><rect x="1463.0" y="634" width="25.800" height="81.800" fill="#002f6c"/><rect x="1568.0" y="634" width="25.800" height="81.800" fill="#002f6c"/><rect x="1690.0" y="634" width="25.800" height="81.800" fill="#002f6c"/><rect x="1804.0" y="634" width="25.800" height="81.800" fill="#002f6c"/></svg>
<span id="t172" class="t" style="right:497.66px;top:547.00px;font-size:14.2px;color:#333;letter-spacing:0.543px">200</span>
<span id="t173" class="t" style="right:497.66px;top:587.00px;font-size:14.2px;color:#333;letter-spacing:0.543px">150</span>
<span id="t174" class="t" style="right:497.66px;top:627.00px;font-size:14.2px;color:#333;letter-spacing:0.543px">100</span>
<span id="t175" class="t" style="right:497.59px;top:667.00px;font-size:14.2px;color:#333;letter-spacing:0.609px">50</span>
<span id="t176" class="t" style="right:497.95px;transform:scaleX(1.0584);transform-origin:right center;top:707.00px;font-size:14.2px;color:#333;letter-spacing:0.235px">0</span>
<span id="t177" class="t" style="left:1476.42px;transform:translateX(-50%);transform-origin:center center;top:732.00px;font-size:12.2px;font-weight:bold;color:#222;letter-spacing:0.438px">Ambetter</span>
<span id="t178" class="t" style="left:1587.01px;transform:translateX(-50%);transform-origin:center center;top:732.00px;font-size:12.2px;font-weight:bold;color:#222;letter-spacing:0.017px">BCBS TX - ACA</span>
<span id="t179" class="t" style="left:1708.67px;transform:translateX(-50%);transform-origin:center center;top:732.00px;font-size:12.2px;font-weight:bold;color:#222;letter-spacing:0.135px">Molina - ACA</span>
<span id="t180" class="t" style="left:1817.07px;transform:translateX(-50%);transform-origin:center center;top:732.00px;font-size:12.2px;font-weight:bold;color:#222;letter-spacing:0.146px">UHC - ACA</span>
<div class="card" style="left:1364px;top:784px;width:516px;height:256px;border-radius:4px"></div>
<span id="t181" class="t" style="left:1384.50px;top:806.00px;font-size:16.2px;font-weight:bold;color:#222;letter-spacing:0.595px">T26 | T65 Members</span>
<svg class="ico" style="left:1364px;top:785px" width="516" height="254" viewBox="1364 785 516 254"><path d="M1489.5 848.500 V974" stroke="#f3f3f3" stroke-width="1"/><path d="M1551.5 848.500 V974" stroke="#f3f3f3" stroke-width="1"/><path d="M1616.4 848.500 V974" stroke="#f3f3f3" stroke-width="1"/><path d="M1685.6 848.500 V974" stroke="#f3f3f3" stroke-width="1"/><path d="M1757.5 848.500 V974" stroke="#f3f3f3" stroke-width="1"/><path d="M1823.4 848.500 V974" stroke="#f3f3f3" stroke-width="1"/><rect x="1490" y="875.200" width="203" height="26.600" fill="#002f6c"/><rect x="1490" y="932.900" width="135" height="26.800" fill="#002f6c"/></svg>
<span id="t182" class="t" style="left:1384.50px;top:883.00px;font-size:12.2px;font-weight:bold;color:#222;letter-spacing:0.361px">Turning 26</span>
<span id="t183" class="t" style="left:1384.50px;top:941.00px;font-size:12.2px;font-weight:bold;color:#222;letter-spacing:0.361px">Turning 65</span>
<span id="t184" class="t" style="left:1490.62px;transform:translateX(-50%) scaleX(1.0584);transform-origin:center center;top:999.00px;font-size:14.2px;color:#333;letter-spacing:0.235px">0</span>
<span id="t185" class="t" style="left:1549.97px;transform:translateX(-50%);transform-origin:center center;top:999.00px;font-size:14.2px;color:#333;letter-spacing:0.543px">100</span>
<span id="t186" class="t" style="left:1618.27px;transform:translateX(-50%);transform-origin:center center;top:999.00px;font-size:14.2px;color:#333;letter-spacing:0.543px">200</span>
<span id="t187" class="t" style="left:1687.07px;transform:translateX(-50%);transform-origin:center center;top:999.00px;font-size:14.2px;color:#333;letter-spacing:0.543px">300</span>
<span id="t188" class="t" style="left:1755.97px;transform:translateX(-50%);transform-origin:center center;top:999.00px;font-size:14.2px;color:#333;letter-spacing:0.543px">400</span>
<span id="t189" class="t" style="left:1825.17px;transform:translateX(-50%);transform-origin:center center;top:999.00px;font-size:14.2px;color:#333;letter-spacing:0.543px">500</span>
</div>
</body>
</html>
